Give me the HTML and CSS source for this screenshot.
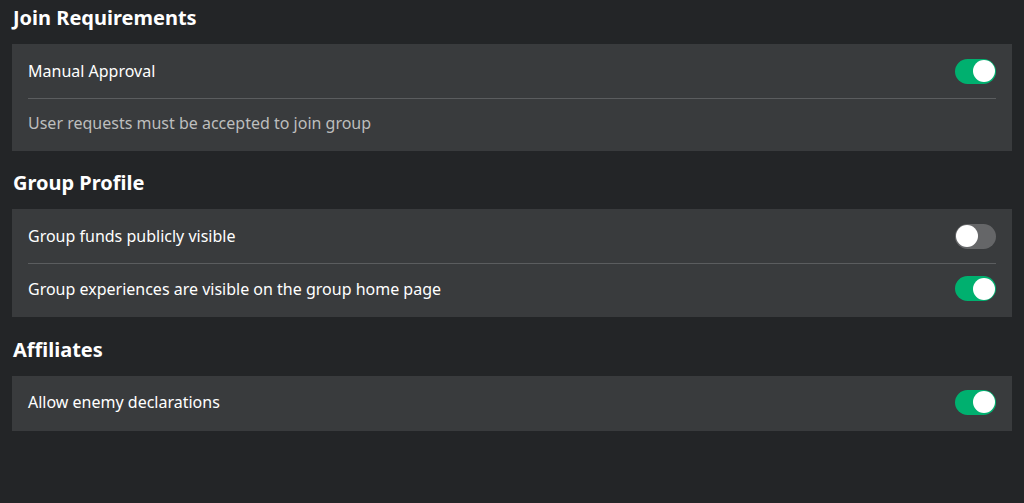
FILE: index.html
```html
<!DOCTYPE html>
<html>
<head>
<meta charset="utf-8">
<link rel="stylesheet" href="styles.css">
</head>
<body>
<div class="page">
  <section class="section">
    <h2 class="heading">Join Requirements</h2>
    <div class="panel">
      <div class="row">
        <span class="label">Manual Approval</span>
        <span class="toggle on"><span class="knob"></span></span>
      </div>
      <div class="row desc-row">
        <span class="desc">User requests must be accepted to join group</span>
      </div>
    </div>
  </section>
  <section class="section">
    <h2 class="heading">Group Profile</h2>
    <div class="panel">
      <div class="row">
        <span class="label">Group funds publicly visible</span>
        <span class="toggle off"><span class="knob"></span></span>
      </div>
      <div class="row short">
        <span class="label">Group experiences are visible on the group home page</span>
        <span class="toggle on"><span class="knob"></span></span>
      </div>
    </div>
  </section>
  <section class="section last">
    <h2 class="heading">Affiliates</h2>
    <div class="panel">
      <div class="row tall">
        <span class="label">Allow enemy declarations</span>
        <span class="toggle on"><span class="knob"></span></span>
      </div>
    </div>
  </section>
</div>
</body>
</html>
```

FILE: styles.css
```css
html, body {
  margin: 0;
  padding: 0;
  background: #232527;
}
body {
  font-family: "Noto Sans", "Open Sans", sans-serif;
  color: #ffffff;
}
.page {
  padding: 5px 12px 0 12px;
  display: flex;
  flex-direction: column;
  gap: 19px;
}
.section {
  display: flex;
  flex-direction: column;
}
.section.last {
  margin-top: 1px;
}
.heading {
  margin: 0 0 13px 1px;
  font-size: 20px;
  line-height: 26px;
  font-weight: 700;
  color: #ffffff;
}
.panel {
  background: #393b3d;
  padding: 0 16px;
  display: flex;
  flex-direction: column;
}
.row {
  height: 54px;
  display: flex;
  align-items: center;
  justify-content: space-between;
  box-sizing: border-box;
}
.row + .row {
  border-top: 1px solid #5b5d5f;
  padding-bottom: 4px;
}
.row.desc-row {
  height: 53px;
}
.row.short {
  height: 54px;
}
.row.tall {
  height: 55px;
  padding-bottom: 3px;
}
.label {
  font-size: 16px;
  color: #ffffff;
}
.desc {
  font-size: 16px;
  color: #bdbebe;
}
.toggle {
  width: 41px;
  height: 25px;
  border-radius: 13px;
  display: flex;
  align-items: center;
  padding: 0 1px;
  box-sizing: border-box;
}
.toggle.on {
  background: #00b06f;
  justify-content: flex-end;
}
.toggle.off {
  background: #656668;
  justify-content: flex-start;
}
.knob {
  width: 22px;
  height: 22px;
  border-radius: 50%;
  background: #ffffff;
}
```
